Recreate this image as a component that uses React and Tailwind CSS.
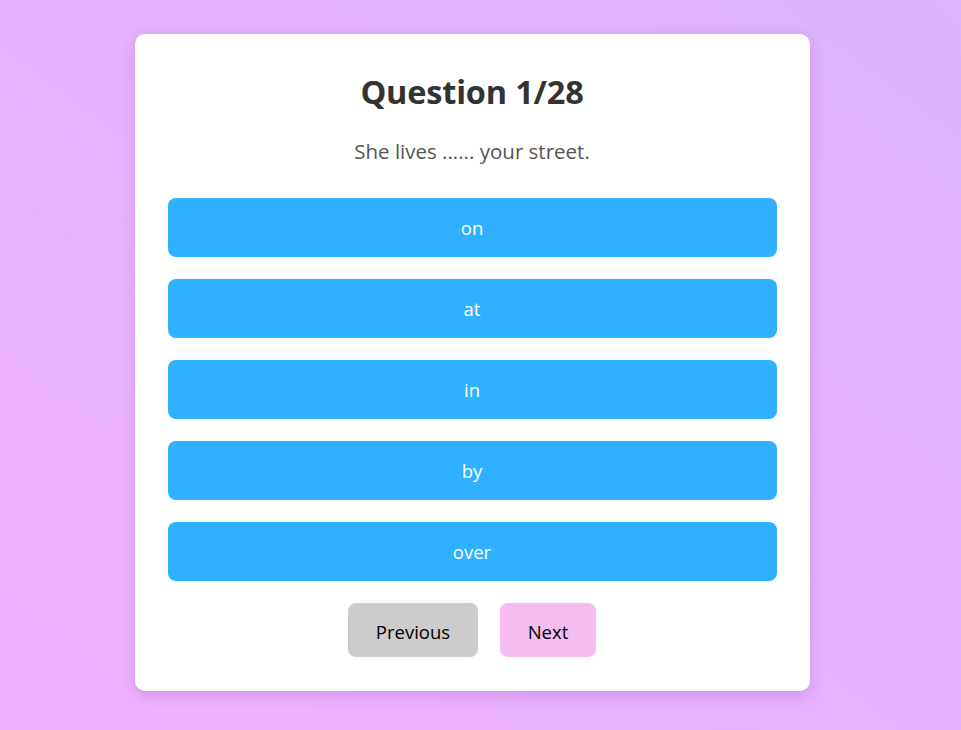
const OPTIONS = ["on", "at", "in", "by", "over"];

export default function App() {
  return (
    <div
      className="min-h-screen w-full bg-gradient-to-tr from-[#f1b1ff] to-[#dcb4ff] flex justify-center pt-[34px] pr-[17px]"
      style={{ fontFamily: '"Open Sans", "Noto Sans", sans-serif' }}
    >
      <div className="w-[675px] h-[657px] bg-white rounded-[10px] shadow-[0_4px_14px_rgba(120,60,150,0.25)] px-[33px] pt-[36px] flex flex-col">
        <h1 className="text-center text-[32.5px] font-bold text-[#333] leading-[44px] tracking-[-0.2px]">
          Question 1/28
        </h1>
        <p className="text-center text-[20.5px] text-[#555] mt-[23px] leading-[28px]">
          She lives ...... your street.
        </p>
        <div className="flex flex-col gap-[22px] mt-[33px]">
          {OPTIONS.map((o) => (
            <button
              key={o}
              className="h-[59px] w-full rounded-[8px] bg-[#2fb1ff] text-white text-[18.5px]"
            >
              {o}
            </button>
          ))}
        </div>
        <div className="flex justify-center gap-[22px] mt-[22px]">
          <button className="w-[130px] h-[54px] rounded-[8px] bg-[#cccccc] text-black text-[18.5px] pt-[3px]">
            Previous
          </button>
          <button className="w-[96px] h-[54px] rounded-[8px] bg-[#f4bdee] text-black text-[18.5px] pt-[3px]">
            Next
          </button>
        </div>
      </div>
    </div>
  );
}
